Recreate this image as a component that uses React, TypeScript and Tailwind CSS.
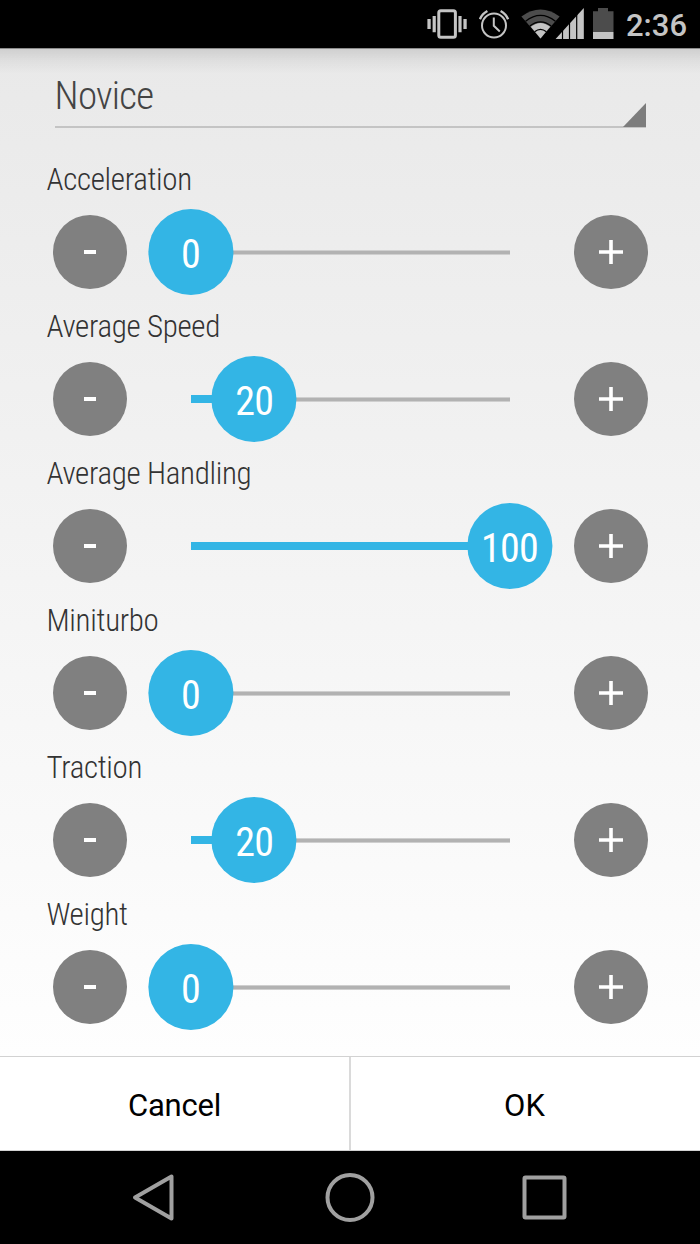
import { useState } from 'react'

const initialStats = [
  { name: 'Acceleration', value: 0 },
  { name: 'Average Speed', value: 20 },
  { name: 'Average Handling', value: 100 },
  { name: 'Miniturbo', value: 0 },
  { name: 'Traction', value: 20 },
  { name: 'Weight', value: 0 }
]

const condensed = 'font-["Roboto_Condensed","Roboto",sans-serif] [font-stretch:75%]'

function StatusBar() {
  return (
    <div className="flex h-12 items-center bg-black pl-[427px] text-[#c4c4c4]">
      <svg width="40" height="48" viewBox="0 0 40 48" fill="currentColor">
        <rect x="11.8" y="10.8" width="16.6" height="26.4" rx="2" fill="none" stroke="currentColor" strokeWidth="3" />
        <path d="M.4 19h3.3v10H.4zM5.6 16h3.2v16.2H5.6zM31.4 16h3.2v16.2h-3.2zM36.4 19h3.3v10h-3.3z" />
      </svg>
      <svg className="ml-3" width="31" height="48" viewBox="0 0 31 48" fill="none" stroke="currentColor" strokeWidth="2">
        <circle cx="15" cy="25.5" r="12" />
        <path d="M14.8 17.500v8.300l6 5.700" />
        <path d="M.9 19.200Q3 14 8.400 11M29.100 19.200Q27 14 21.600 11" strokeWidth="2.4" />
      </svg>
      <svg className="ml-[11px]" width="64" height="48" viewBox="0 0 64 48">
        <path d="M.4 16.4Q19.5 2.8 38.6 16.4L19.5 38.4Z" fill="#4c4c4c" />
        <path d="M9.8 26.8Q19.5 19 29.2 26.8L19.5 38.4Z" fill="currentColor" />
        <g fill="none" stroke="#000" strokeWidth="1.3">
          <path d="M4.6 21.2Q19.5 9.6 34.4 21.2M8.8 26Q19.5 17.6 30.2 26M13.6 31.8Q19.5 26.8 25.4 31.8" />
        </g>
        <path d="M34.6 39 62.8 8v31z" fill="currentColor" />
        <path d="M41.5 25v14M48.500 18v21M55.700 11v28" stroke="#000" strokeWidth="1.2" />
      </svg>
      <svg className="ml-[7px]" width="22" height="48" viewBox="0 0 22 48">
        <path d="M1 11.3h5V8h10v3.300h5.500V32H1z" fill="#4c4c4c" />
        <path d="M1 32h20.500v7H1z" fill="currentColor" />
      </svg>
      <span className='ml-[12px] pt-[3px] font-["Roboto",sans-serif] text-[31px] leading-none font-medium whitespace-nowrap'>2:36</span>
    </div>
  )
}

type StepButtonProps = { label: string; onClick: () => void; children: React.ReactNode }

function StepButton({ label, onClick, children }: StepButtonProps) {
  return (
    <button
      aria-label={label}
      onClick={onClick}
      className="flex h-[74px] w-[74px] shrink-0 items-center justify-center rounded-full bg-[#808080]"
    >
      {children}
    </button>
  )
}

type StatRowProps = { name: string; value: number; onChange: (value: number) => void }

function StatRow({ name, value, onChange }: StatRowProps) {
  return (
    <div className="h-[147px]">
      <div className={`${condensed} ml-[46.5px] h-9 text-[31px] leading-9 font-light tracking-[-0.32px] text-[#333333]`}>{name}</div>
      <div className="mt-[11px] flex h-[86px] items-center pl-[52.6px]">
        <StepButton label={`Decrease ${name}`} onClick={() => onChange(Math.max(0, value - 1))}>
          <span className="h-1 w-3 bg-white" />
        </StepButton>
        <div className="relative ml-16 flex h-[86px] w-[319px] items-center">
          <div className="h-[5px] w-full border-y border-[#cfcfcf] bg-[#b2b2b2]" />
          <div className="absolute left-0 h-2 bg-[#33b5e5]" style={{ width: `${value}%` }} />
          <div
            className={`${condensed} absolute top-0 flex h-[86px] w-[85px] -translate-x-[42.600px] items-center justify-center rounded-full bg-[#33b5e5] pt-[5px] text-[40px] leading-none tracking-[-0.8px] text-white`}
            style={{ left: `${value}%` }}
          >
            {value}
          </div>
        </div>
        <div className="ml-16">
          <StepButton label={`Increase ${name}`} onClick={() => onChange(Math.min(100, value + 1))}>
            <svg width="24" height="24" viewBox="0 0 24 24" stroke="#fff" strokeWidth="3.6">
              <path d="M0 12h24M12 0v24" />
            </svg>
          </StepButton>
        </div>
      </div>
    </div>
  )
}

export default function App() {
  const [stats, setStats] = useState(initialStats)

  const updateStat = (name: string, value: number) => {
    setStats(stats.map((s) => (s.name === name ? { ...s, value } : s)))
  }

  return (
    <div className="flex h-[1244px] w-[700px] flex-col overflow-hidden bg-black">
      <StatusBar />
      <main className="h-[1008px] bg-linear-to-b from-[#e9e9e9] to-[#fefefe]">
        <div className="h-[114px] border-t border-[#8c8c8c] bg-[linear-gradient(to_bottom,#0000001c,#0000000b_12px,transparent_25px)]">
          <div className="ml-[54.6px] flex h-[79px] w-[591px] items-end justify-between border-b-2 border-[#c4c4c4]">
            <span className={`${condensed} pb-[8px] text-[39px] leading-[44px] font-light tracking-[-0.75px] text-[#444444]`}>Novice</span>
            <svg className="-mb-px" width="23" height="24" viewBox="0 0 23 24">
              <path d="M23 0v24H0z" fill="#7d7d7d" />
            </svg>
          </div>
        </div>
        {stats.map((s) => (
          <StatRow key={s.name} name={s.name} value={s.value} onChange={(v) => updateStat(s.name, v)} />
        ))}
      </main>
      <div className='flex h-[95px] border-y border-[#d2d2d2] bg-white font-["Roboto",sans-serif] text-[31px] text-black'>
        <button className="w-[349px] pt-[5px] tracking-[-0.2px]">Cancel</button>
        <div className="w-[2px] bg-[#dadada]" />
        <button className="flex-1 pt-[5px] pr-[2px]">OK</button>
      </div>
      <nav className="h-[93px]">
        <svg width="700" height="93" viewBox="0 0 700 93" fill="none" stroke="#a0a0a0" strokeWidth="4" strokeLinejoin="round">
          <path d="M135 46.500 171.500 25.500v42z" />
          <circle cx="350" cy="46.500" r="22.500" />
          <rect x="524.5" y="26.500" width="40" height="40" rx="1" />
        </svg>
      </nav>
    </div>
  )
}
